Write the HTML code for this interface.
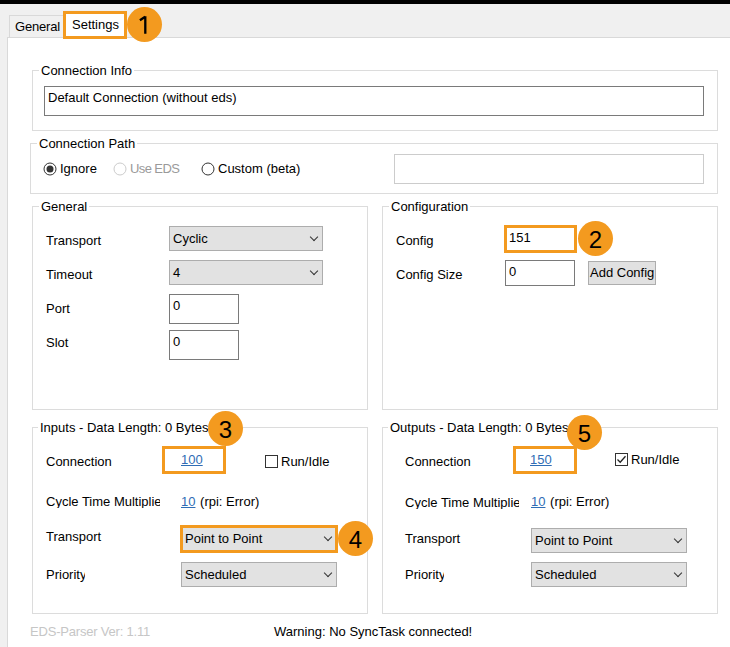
<!DOCTYPE html>
<html><head><meta charset="utf-8">
<style>
*{margin:0;padding:0;box-sizing:border-box}
html,body{width:730px;height:647px;overflow:hidden}
body{background:#F0F0F0;position:relative;font-family:"Liberation Sans",sans-serif;font-size:13px;color:#000}
.a{position:absolute}
.t{position:absolute;line-height:13px;white-space:nowrap}
.grp{position:absolute;border:1px solid #DCDCDC}
.gl{position:absolute;background:#fff;line-height:13px;white-space:nowrap;padding:0 2px}
.tb{position:absolute;background:#fff;border:1px solid #7A7A7A}
.cb{position:absolute;background:#E2E2E2;border:1px solid #ADADAD}
.ob{position:absolute;border:3px solid #F39A1F}
.circ{position:absolute;width:35px;height:35px;border-radius:50%;background:#F39A1F;color:#000;font-size:24px;line-height:37px;text-align:center}
.lnk{color:#2F6DB5;text-decoration:underline}
.cb::after{content:"";position:absolute;right:5px;top:7px;width:5px;height:5px;border-right:1.2px solid #333;border-bottom:1.2px solid #333;transform:rotate(45deg)}
</style></head><body>
<div class="a" style="left:0;top:0;width:730px;height:4px;background:#000"></div>

<!-- tabs -->
<div class="a" style="left:9px;top:15px;width:55px;height:23px;border:1px solid #D9D9D9;border-bottom:none;background:#F0F0F0"></div>
<div class="t" style="left:15px;top:20px;letter-spacing:-0.2px">General</div>
<div class="a" style="left:7px;top:37px;width:730px;height:620px;border:1px solid #D9D9D9;background:#fff"></div>
<div class="a" style="left:64px;top:12px;width:62px;height:27px;background:#fff"></div>
<div class="t" style="left:72px;top:18px">Settings</div>
<div class="ob" style="left:63px;top:11px;width:64px;height:28px"></div>
<div class="circ" style="left:127px;top:7px"></div><svg class="a" style="left:127px;top:7px" width="35" height="35" viewBox="0 0 35 35"><path d="M12.9 13.2 L18.2 9.7 M18.3 9.2 L18.3 26.7" fill="none" stroke="#000" stroke-width="2.3" stroke-linecap="butt"/></svg>

<!-- Connection Info -->
<div class="grp" style="left:32px;top:70px;width:686px;height:61px"></div>
<div class="gl" style="left:39px;top:64px">Connection Info</div>
<div class="tb" style="left:44px;top:86px;width:660px;height:30px"></div>
<div class="t" style="left:48px;top:91px">Default Connection (without eds)</div>

<!-- Connection Path -->
<div class="grp" style="left:30px;top:143px;width:688px;height:51px"></div>
<div class="gl" style="left:37px;top:137px">Connection Path</div>
<svg class="a" style="left:43px;top:162px" width="14" height="14" viewBox="0 0 14 14"><circle cx="7" cy="7" r="6" fill="#fff" stroke="#333" stroke-width="1"/><circle cx="7" cy="7" r="3.5" fill="#333"/></svg>
<div class="t" style="left:60px;top:162px">Ignore</div>
<svg class="a" style="left:113px;top:162px" width="14" height="14" viewBox="0 0 14 14"><circle cx="7" cy="7" r="6" fill="#fff" stroke="#CCCCCC" stroke-width="1"/></svg>
<div class="t" style="left:130px;top:162px;color:#9A9A9A;letter-spacing:-0.6px">Use EDS</div>
<svg class="a" style="left:201px;top:162px" width="14" height="14" viewBox="0 0 14 14"><circle cx="7" cy="7" r="6" fill="#fff" stroke="#333" stroke-width="1"/></svg>
<div class="t" style="left:218px;top:162px">Custom (beta)</div>
<div class="tb" style="left:394px;top:154px;width:310px;height:30px;border-color:#CCCCCC"></div>

<!-- General -->
<div class="grp" style="left:32px;top:206px;width:336px;height:204px"></div>
<div class="gl" style="left:39px;top:200px">General</div>
<div class="t" style="left:46px;top:234px">Transport</div>
<div class="cb" style="left:169px;top:226px;width:154px;height:25px"></div>
<div class="t" style="left:173px;top:232px">Cyclic</div>
<div class="t" style="left:46px;top:268px">Timeout</div>
<div class="cb" style="left:169px;top:260px;width:154px;height:25px"></div>
<div class="t" style="left:173px;top:266px">4</div>
<div class="t" style="left:46px;top:302px">Port</div>
<div class="tb" style="left:169px;top:294px;width:70px;height:30px"></div>
<div class="t" style="left:173px;top:299px">0</div>
<div class="t" style="left:46px;top:336px">Slot</div>
<div class="tb" style="left:169px;top:330px;width:70px;height:30px"></div>
<div class="t" style="left:173px;top:335px">0</div>

<!-- Configuration -->
<div class="grp" style="left:382px;top:206px;width:336px;height:204px"></div>
<div class="gl" style="left:389px;top:200px">Configuration</div>
<div class="t" style="left:396px;top:234px">Config</div>
<div class="tb" style="left:505px;top:226px;width:71px;height:26px"></div>
<div class="t" style="left:509px;top:231px">151</div>
<div class="ob" style="left:504px;top:225px;width:73px;height:28px"></div>
<div class="circ" style="left:578px;top:221px">2</div>
<div class="t" style="left:396px;top:268px">Config Size</div>
<div class="tb" style="left:505px;top:260px;width:70px;height:26px"></div>
<div class="t" style="left:509px;top:265px">0</div>
<div class="a" style="left:588px;top:261px;width:68px;height:24px;background:#E1E1E1;border:1px solid #ADADAD;overflow:hidden"><div class="t" style="left:1px;top:4px">Add Config</div></div>

<!-- Inputs -->
<div class="grp" style="left:32px;top:427px;width:336px;height:187px"></div>
<div class="gl" style="left:38px;top:421px">Inputs - Data Length: 0 Bytes</div>
<div class="t" style="left:46px;top:455px">Connection</div>
<div class="ob" style="left:162px;top:446px;width:64px;height:28px"></div>
<div class="t lnk" style="left:181px;top:453px">100</div>
<div class="circ" style="left:208px;top:411px">3</div>
<div class="a" style="left:265px;top:455px;width:13px;height:13px;border:1px solid #333;background:#fff"></div>
<div class="t" style="left:281px;top:455px">Run/Idle</div>
<div class="t" style="left:46px;top:495px;width:114px;overflow:hidden">Cycle Time Multiplier</div>
<div class="t" style="left:181px;top:495px"><span class="lnk">10</span> <span style="margin-left:1px">(rpi: Error)</span></div>
<div class="t" style="left:46px;top:530px">Transport</div>
<div class="cb" style="left:181px;top:526px;width:156px;height:26px"></div>
<div class="t" style="left:185px;top:532px">Point to Point</div>
<div class="ob" style="left:180px;top:525px;width:158px;height:28px"></div>
<div class="circ" style="left:338px;top:521px">4</div>
<div class="t" style="left:46px;top:568px;width:39px;overflow:hidden;height:16px">Priority</div>
<div class="cb" style="left:181px;top:562px;width:156px;height:25px"></div>
<div class="t" style="left:185px;top:568px">Scheduled</div>

<!-- Outputs -->
<div class="grp" style="left:382px;top:427px;width:336px;height:187px"></div>
<div class="gl" style="left:388px;top:421px">Outputs - Data Length: 0 Bytes</div>
<div class="t" style="left:405px;top:455px">Connection</div>
<div class="ob" style="left:513px;top:446px;width:64px;height:28px"></div>
<div class="t lnk" style="left:530px;top:453px">150</div>
<div class="circ" style="left:567px;top:415px">5</div>
<div class="a" style="left:615px;top:453px;width:13px;height:13px;border:1px solid #333;background:#fff"></div>
<svg class="a" style="left:615px;top:453px" width="13" height="13" viewBox="0 0 13 13"><path d="M2.5 6.5 L5.2 9.2 L10.5 3.2" fill="none" stroke="#222" stroke-width="1.3"/></svg>
<div class="t" style="left:631px;top:453px">Run/Idle</div>
<div class="t" style="left:405px;top:496px;width:114px;overflow:hidden">Cycle Time Multiplier</div>
<div class="t" style="left:531px;top:495px"><span class="lnk">10</span> <span style="margin-left:1px">(rpi: Error)</span></div>
<div class="t" style="left:405px;top:532px">Transport</div>
<div class="cb" style="left:531px;top:528px;width:156px;height:25px"></div>
<div class="t" style="left:535px;top:534px">Point to Point</div>
<div class="t" style="left:405px;top:568px;width:39px;overflow:hidden;height:16px">Priority</div>
<div class="cb" style="left:531px;top:562px;width:156px;height:25px"></div>
<div class="t" style="left:535px;top:568px">Scheduled</div>

<div class="t" style="left:30px;top:625px;color:#C6C6C6;letter-spacing:-0.2px">EDS-Parser Ver: 1.11</div>
<div class="t" style="left:274px;top:625px">Warning: No SyncTask connected!</div>
</body></html>
